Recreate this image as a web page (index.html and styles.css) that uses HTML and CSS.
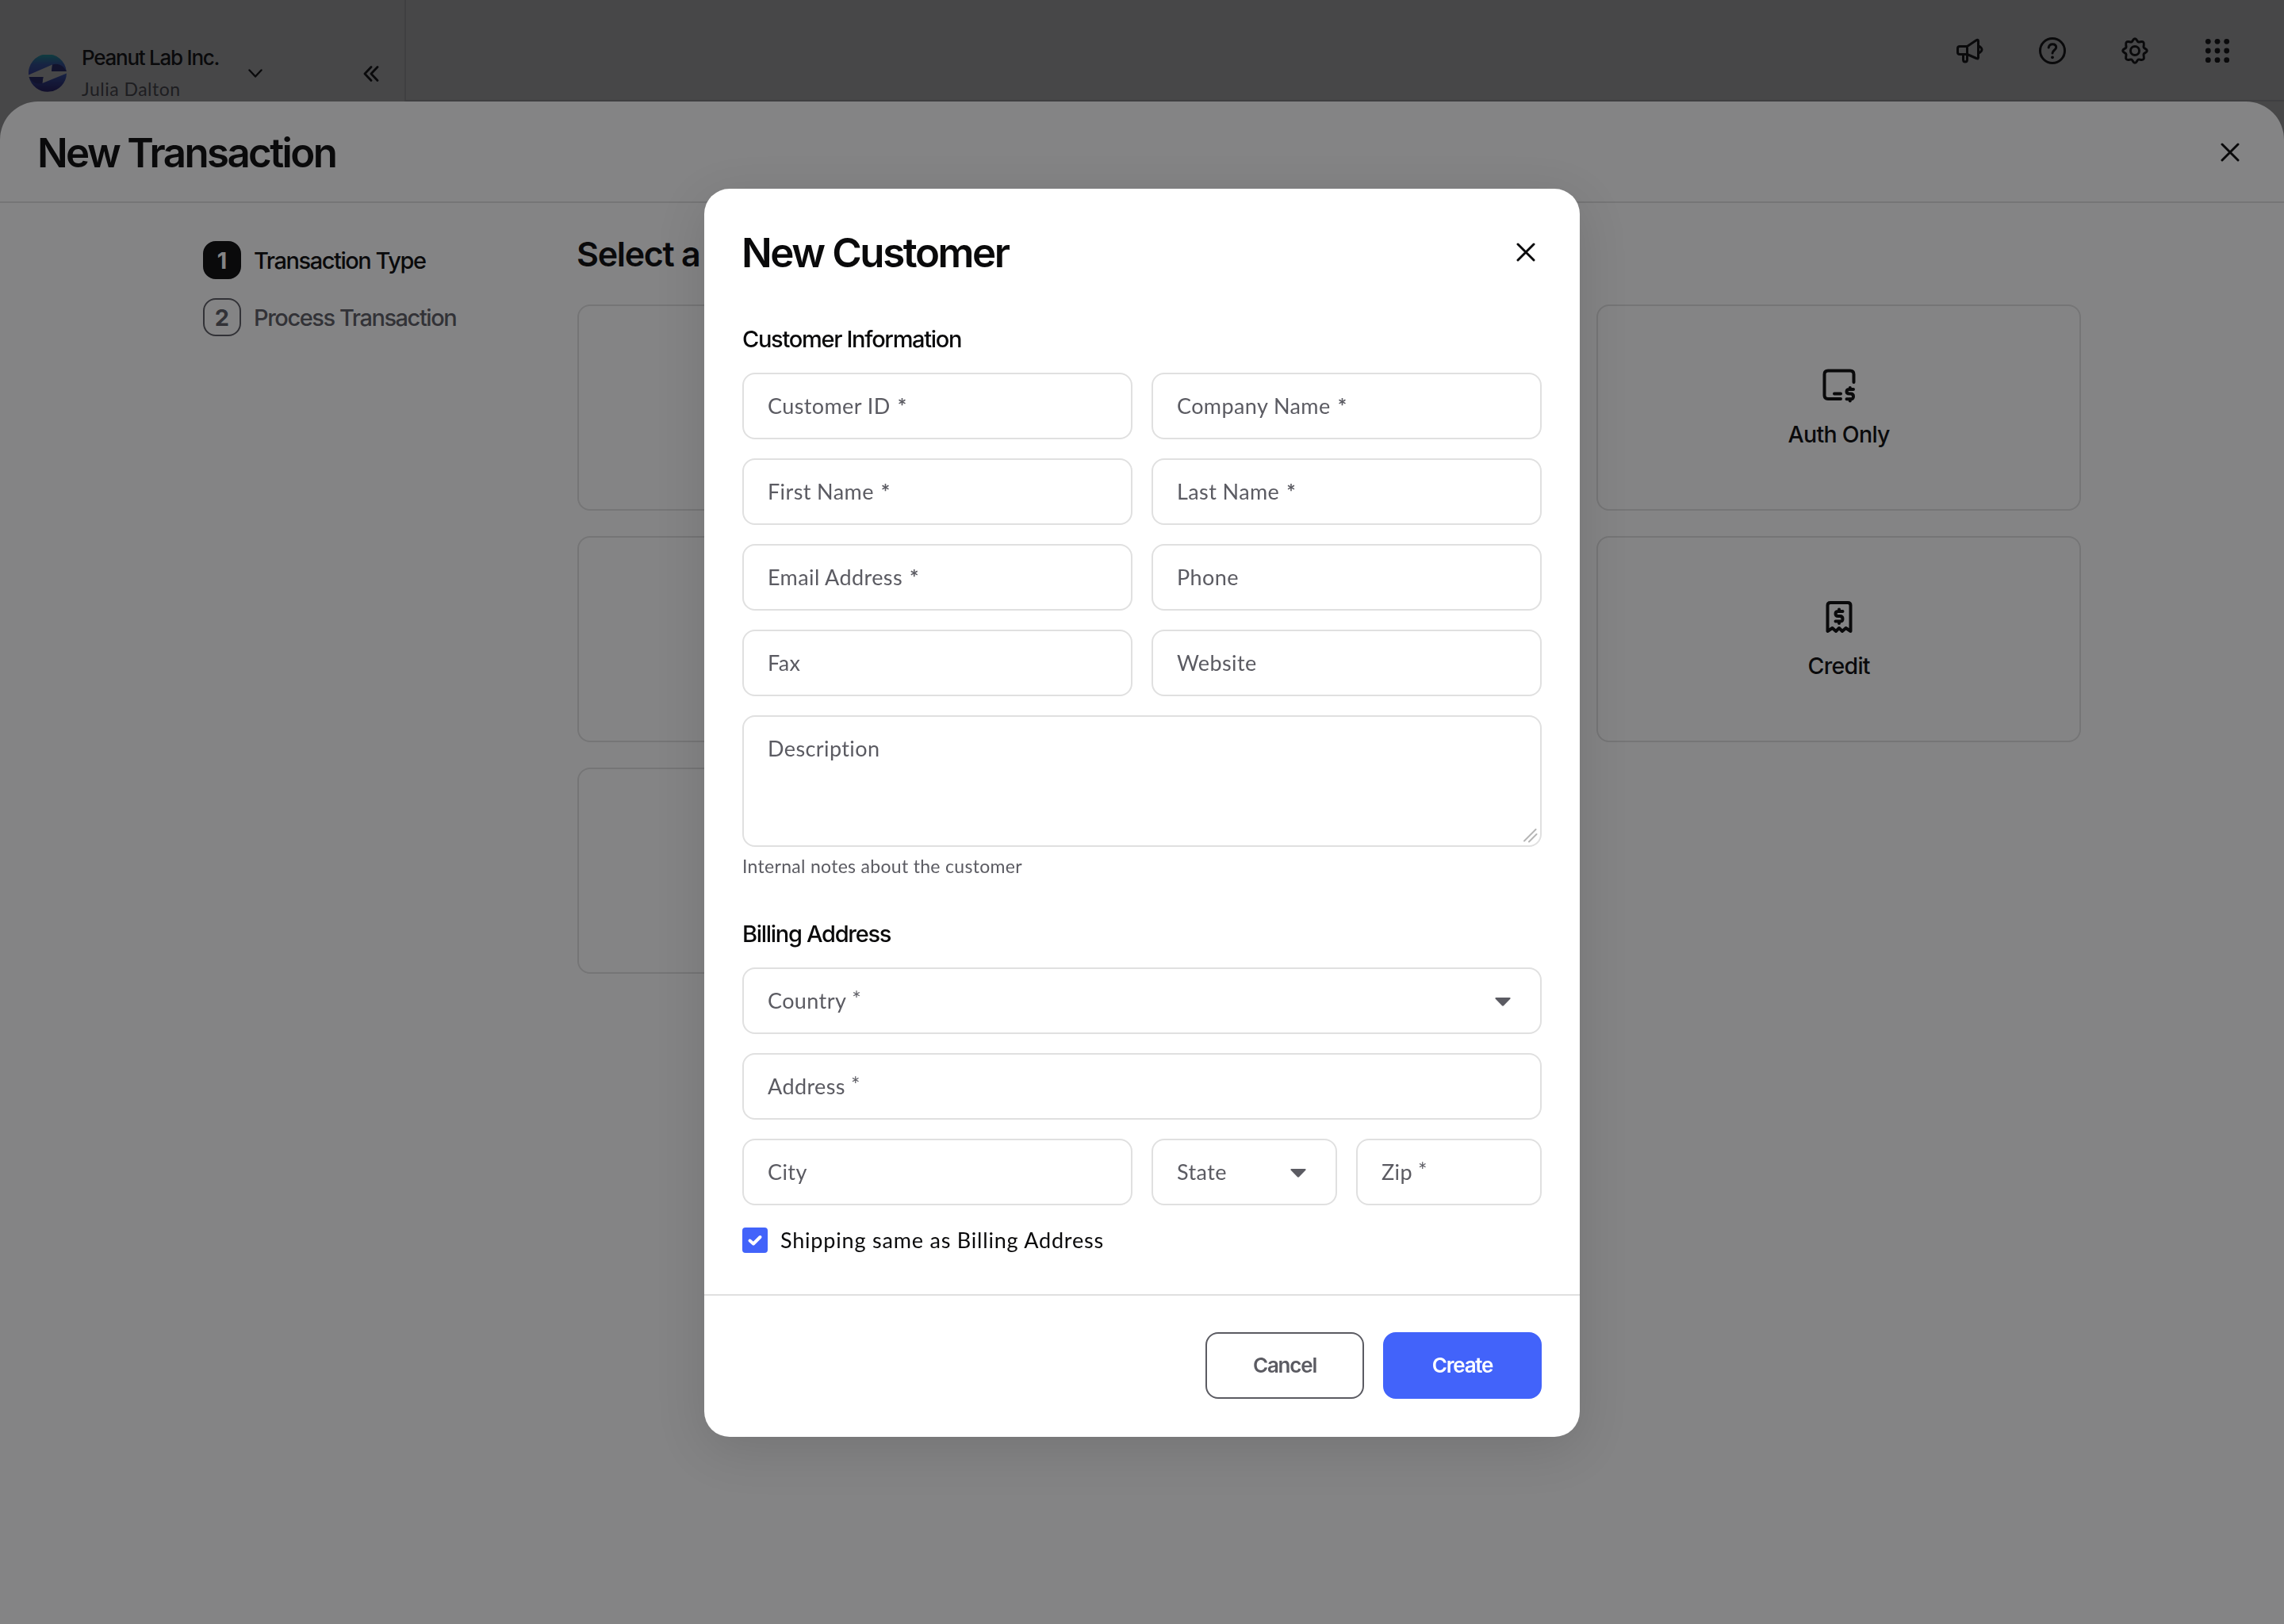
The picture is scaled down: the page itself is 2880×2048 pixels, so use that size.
FILE: index.html
```html
<!DOCTYPE html>
<html lang="en">
<head>
    <meta charset="UTF-8">
    <meta name="viewport" content="width=device-width, initial-scale=1.0">
    <title>New Transaction</title>
    <link rel="stylesheet" href="styles.css">
</head>
<body>

    <!-- APP SHELL -->
    <div class="app">
        <aside class="sidebar">
            <div class="account">
                <svg class="logo" viewBox="0 0 48 48">
                    <defs>
                        <linearGradient id="logo-top" x1="0" y1="0" x2="0" y2="1">
                            <stop offset="0" stop-color="#1fd8dc"/>
                            <stop offset="0.5" stop-color="#3f70e8"/>
                            <stop offset="1" stop-color="#4450d8"/>
                        </linearGradient>
                        <linearGradient id="logo-bottom" x1="0" y1="0" x2="0" y2="1">
                            <stop offset="0" stop-color="#3f6cf0"/>
                            <stop offset="1" stop-color="#2a1f8c"/>
                        </linearGradient>
                    </defs>
                    <path fill="url(#logo-top)" d="M0 25.500A24 24 0 0 1 47.800 21L29 21L30 12.500Z"/>
                    <path fill="#2c2f92" d="M29 21L30 12.500C38 10 44 14 47.800 21Z"/>
                    <path fill="url(#logo-bottom)" d="M48 23.500A24 24 0 0 1 .6 28L18.500 28L17.300 36Z"/>
                    <path fill="#2c2f92" d="M.6 28H18.500L17.300 36C9 38 3 34 .6 28Z"/>
                </svg>
                <div class="account-text">
                    <span class="account-name">Peanut Lab Inc.</span>
                    <span class="account-user">Julia Dalton</span>
                </div>
                <svg class="chevron" viewBox="0 0 18 12"><path d="M1.500 1.500L9 9.500L16.500 1.500"/></svg>
            </div>
            <svg class="collapse" viewBox="0 0 20 20"><path d="M10 1.500L2 10L10 18.500M18 1.500L10 10L18 18.500"/></svg>
        </aside>
        <header class="topbar">
            <svg class="icon" viewBox="0 0 40 40">
                <path d="M16.500 14.500H7.200Q4.500 14.500 4.500 17V22Q4.500 24.500 7.200 24.500H16.500ZM16.500 14.500L28 6.800Q30.500 5.500 30.500 8V28.500Q30.500 31 28 29.500L16.500 24.500M11.500 24.500V31Q11.500 34 14 34T16.500 31V24.500M30.500 13.500Q35 16 35 18.500T30.500 23.500"/>
            </svg>
            <svg class="icon" viewBox="0 0 40 40">
                <circle cx="20" cy="20" r="15.500"/>
                <path d="M15.200 16C15.600 13.400 17.500 11.700 20.200 11.700C23.200 11.700 24.700 13.500 24.700 15.800C24.700 19 20 19.500 20 23"/>
                <circle class="solid" cx="20" cy="28.300" r="1.900"/>
            </svg>
            <svg class="icon" viewBox="0 0 40 40">
                <circle cx="20" cy="20" r="5.500"/>
                <path d="M20 4.700C22.400 4.700 22.600 8.200 24.200 8.900C25.900 9.600 28.900 7.500 30.700 9.300C32.500 11.100 30.400 14.100 31.100 15.800C31.800 17.400 35.300 17.600 35.300 20C35.300 22.400 31.800 22.600 31.100 24.200C30.400 25.900 32.500 28.900 30.700 30.700C28.900 32.500 25.900 30.400 24.200 31.100C22.600 31.800 22.400 35.300 20 35.300C17.600 35.300 17.400 31.800 15.800 31.100C14.100 30.400 11.100 32.500 9.300 30.700C7.500 28.900 9.600 25.900 8.900 24.200C8.200 22.600 4.700 22.400 4.700 20C4.700 17.600 8.200 17.400 8.900 15.800C9.600 14.100 7.500 11.100 9.300 9.300C11.100 7.500 14.100 9.600 15.800 8.900C17.400 8.200 17.600 4.700 20 4.700Z"/>
            </svg>
            <svg class="icon dots" viewBox="0 0 40 40">
                <circle cx="8.300" cy="8.300" r="3.400"/><circle cx="20" cy="8.300" r="3.400"/><circle cx="31.700" cy="8.300" r="3.400"/>
                <circle cx="8.300" cy="20" r="3.400"/><circle cx="20" cy="20" r="3.400"/><circle cx="31.700" cy="20" r="3.400"/>
                <circle cx="8.300" cy="31.700" r="3.400"/><circle cx="20" cy="31.700" r="3.400"/><circle cx="31.700" cy="31.700" r="3.400"/>
            </svg>
        </header>
    </div>

    <!-- NEW TRANSACTION SHEET -->
    <div class="sheet-backdrop">
        <section class="sheet">
            <div class="sheet-header">
                <h1 class="title">New Transaction</h1>
                <svg class="close" viewBox="0 0 24 24"><path d="M2 2L22 22M22 2L2 22"/></svg>
            </div>
            <div class="sheet-body">
                <ol class="steps">
                    <li class="step active"><span class="step-number">1</span><span>Transaction Type</span></li>
                    <li class="step"><span class="step-number">2</span><span>Process Transaction</span></li>
                </ol>
                <div class="types">
                    <h2 class="types-title">Select a</h2>
                    <div class="cards">
                        <div class="card"></div>
                        <div class="card"></div>
                        <div class="card">
                            <svg class="card-icon" viewBox="0 0 48 48">
                                <path d="M26 41H10Q5.500 41 5.500 36.500V10Q5.500 5.500 10 5.500H38Q42.500 5.500 42.500 10V20M18 34.500H26"/>
                                <path d="M42 29H37Q33.500 29 33.500 31.700T37 34.500H38.500Q42 34.500 42 38T38.500 41.200H33.500M37.800 27V29M37.800 41V43.500"/>
                            </svg>
                            <span>Auth Only</span>
                        </div>
                        <div class="card"></div>
                        <div class="card"></div>
                        <div class="card">
                            <svg class="card-icon" viewBox="0 0 48 48">
                                <path d="M9.500 42V9.500Q9.500 6 13 6H35Q38.500 6 38.500 9.500V42L32.500 38L28 42L24 38L20 42L15.500 38Z"/>
                                <path d="M28.500 17H23Q19.500 17 19.500 20T23 23H25Q28.500 23 28.500 26.500T25 29.500H19.500M24 14.500V17M24 29.500V32"/>
                            </svg>
                            <span>Credit</span>
                        </div>
                        <div class="card"></div>
                    </div>
                </div>
            </div>
        </section>
    </div>

    <!-- NEW CUSTOMER MODAL -->
    <div class="modal-backdrop">
        <section class="modal">
            <div class="modal-header">
                <h2 class="title">New Customer</h2>
                <svg class="close" viewBox="0 0 24 24"><path d="M2 2L22 22M22 2L2 22"/></svg>
            </div>
            <form class="modal-body">
                <h3 class="section-title">Customer Information</h3>
                <div class="fields">
                    <div class="field">Customer ID<b class="req">*</b></div>
                    <div class="field">Company Name<b class="req">*</b></div>
                    <div class="field">First Name<b class="req">*</b></div>
                    <div class="field">Last Name<b class="req">*</b></div>
                    <div class="field">Email Address<b class="req">*</b></div>
                    <div class="field">Phone</div>
                    <div class="field">Fax</div>
                    <div class="field">Website</div>
                    <div class="field full textarea">Description
                        <svg class="resize" viewBox="0 0 18 18"><path d="M1 15.500L15.500 1M7 16.500L16.500 7"/></svg>
                    </div>
                </div>
                <p class="hint">Internal notes about the customer</p>
                <h3 class="section-title">Billing Address</h3>
                <div class="fields">
                    <div class="field full">Country<span class="req light">*</span>
                        <svg class="caret" viewBox="0 0 20 11"><path d="M1.500 0H18.500Q20.500 .5 19 2L11 10.300Q10 11 9 10.300L1 2Q-.5 .5 1.500 0Z"/></svg>
                    </div>
                    <div class="field full">Address<span class="req light">*</span></div>
                    <div class="field">City</div>
                    <div class="split">
                        <div class="field">State
                            <svg class="caret" viewBox="0 0 20 11"><path d="M1.500 0H18.500Q20.500 .5 19 2L11 10.300Q10 11 9 10.300L1 2Q-.5 .5 1.500 0Z"/></svg>
                        </div>
                        <div class="field">Zip<span class="req light">*</span></div>
                    </div>
                </div>
                <label class="check">
                    <span class="checkbox"><svg viewBox="0 0 32 32"><path d="M9.500 16.500L14 20.500L22.500 12"/></svg></span>
                    Shipping same as Billing Address
                </label>
            </form>
            <div class="modal-footer">
                <button class="btn">Cancel</button>
                <button class="btn primary">Create</button>
            </div>
        </section>
    </div>

</body>
</html>
```

FILE: styles.css
```css
* {
    box-sizing: border-box;
}

body {
    margin: 0;
    height: 2048px;
    overflow: hidden;
    background: #fff;
    color: #0a0a0b;
    font-family: Lato, sans-serif;
}

h1, h2, h3, p, ol {
    margin: 0;
    padding: 0;
}

svg {
    display: block;
    flex: none;
    fill: none;
    stroke: #0a0a0b;
    stroke-width: 3;
    stroke-linecap: round;
    stroke-linejoin: round;
}

/* app shell */
.app {
    display: flex;
    height: 2048px;
}

.sidebar {
    width: 512px;
    padding: 57px 32px 0 36px;
    border-right: 2px solid #e0e0e0;
    display: flex;
    justify-content: space-between;
    align-items: flex-start;
}

.account {
    display: flex;
    align-items: center;
}

.logo {
    width: 48px;
    height: 48px;
    stroke: none;
}

.account-text {
    margin-left: 19px;
    margin-bottom: -3px;
    width: 210px;
    display: flex;
    flex-direction: column;
    gap: 3px;
}

.account-name {
    font: 500 26px/32px Inter, sans-serif;
    letter-spacing: -1.25px;
}

.account-user {
    font-size: 23px;
    line-height: 40px;
    color: #5b5b62;
    letter-spacing: 0.5px;
}

.chevron {
    width: 18px;
    height: 12px;
    stroke-width: 2.4;
}

.collapse {
    width: 20px;
    height: 20px;
    margin-top: 26px;
    stroke-width: 2.8;
}

.topbar {
    flex: 1;
    height: 128px;
    padding: 2px 64px 0 0;
    border-bottom: 2px solid #e0e0e0;
    display: flex;
    justify-content: flex-end;
    align-items: center;
    gap: 64px;
}

.icon {
    width: 40px;
    height: 40px;
}

.icon .solid, .dots {
    fill: #0a0a0b;
    stroke: none;
}

/* transaction sheet */
.sheet-backdrop, .modal-backdrop {
    position: fixed;
    inset: 0;
    background: rgba(10, 10, 11, 0.5);
}

.sheet {
    height: 1920px;
    margin-top: 128px;
    background: #fff;
    border-radius: 48px 48px 0 0;
}

.sheet-header {
    height: 128px;
    padding: 2px 56px 0 47px;
    border-bottom: 2px solid #e0e0e0;
    display: flex;
    justify-content: space-between;
    align-items: center;
}

.title {
    padding-top: 2px;
    font: 600 51px/62px Inter, sans-serif;
    letter-spacing: -2.6px;
}

.close {
    width: 24px;
    height: 24px;
}

.sheet-body {
    display: flex;
    padding: 48px 256px 0;
}

.steps {
    width: 471px;
    list-style: none;
    display: flex;
    flex-direction: column;
    gap: 24px;
}

.step {
    display: flex;
    gap: 16px;
    height: 48px;
    color: #5b5b62;
    font: 500 29px/50px Inter, sans-serif;
    letter-spacing: -1.45px;
}

.step-number {
    width: 48px;
    height: 48px;
    border: 2px solid #5b5b62;
    border-radius: 16px;
    font-weight: 700;
    line-height: 46px;
    letter-spacing: 0;
    text-align: center;
}

.step.active {
    color: #0a0a0b;
}

.step.active .step-number {
    background: #0a0a0b;
    border-color: #0a0a0b;
    color: #fff;
}

.types {
    flex: 1;
}

.types-title {
    font: 600 43px/48px Inter, sans-serif;
    letter-spacing: -1.3px;
    margin-top: -8px;
    margin-bottom: 40px;
}

.cards {
    display: grid;
    grid-template-columns: repeat(3, 1fr);
    gap: 32px;
    margin-left: 1px;
}

.card {
    height: 260px;
    border: 2px solid #e0e0e0;
    border-radius: 16px;
    display: flex;
    flex-direction: column;
    align-items: center;
    padding-top: 76px;
    font: 500 28.500px/40px Inter, sans-serif;
    letter-spacing: -0.7px;
}

.card-icon {
    width: 48px;
    height: 48px;
    margin-bottom: 18px;
    stroke-width: 4;
}

/* customer modal */
.modal-backdrop {
    display: flex;
    align-items: flex-start;
    justify-content: center;
    padding-top: 238px;
}

.modal {
    width: 1104px;
    height: 1574px;
    background: #fff;
    border-radius: 32px;
    box-shadow: 0 16px 64px rgba(10, 10, 11, 0.12);
}

.modal-header {
    display: flex;
    justify-content: space-between;
    align-items: center;
    padding: 48px 56px 0 47px;
}

.modal .title {
    letter-spacing: -2.4px;
}

.modal-body {
    height: 1282px;
    padding: 58px 48px 0;
}

.section-title {
    font: 500 29px/40px Inter, sans-serif;
    letter-spacing: -1.3px;
    margin-bottom: 22px;
}

.fields {
    display: grid;
    grid-template-columns: 1fr 1fr;
    gap: 24px;
}

.split {
    display: grid;
    grid-template-columns: 1fr 1fr;
    gap: 24px;
}

.field {
    height: 84px;
    padding: 0 30px 2px;
    border: 2px solid #e0e0e0;
    border-radius: 16px;
    display: flex;
    align-items: center;
    color: #5b5b62;
    font-size: 27px;
    letter-spacing: 0.4px;
}

.full {
    grid-column: 1 / 3;
}

.req {
    margin-left: 9px;
}

.req.light {
    margin-left: 7px;
    margin-top: -4px;
}

.caret {
    width: 20px;
    height: 11px;
    margin-top: 5px;
    margin-left: auto;
    margin-right: 7px;
    fill: #5b5b62;
    stroke: none;
}

.textarea {
    position: relative;
    height: 166px;
    align-items: flex-start;
    line-height: 80px;
}

.resize {
    position: absolute;
    right: 3px;
    bottom: 3px;
    width: 18px;
    height: 18px;
    stroke: #b5b5b5;
    stroke-width: 2;
}

.hint {
    margin: 8px 0 50px;
    color: #5b5b62;
    font-size: 23px;
    line-height: 32px;
    letter-spacing: 0.3px;
}

.check {
    margin-top: 24px;
    display: flex;
    align-items: center;
    gap: 16px;
    font-size: 27px;
    line-height: 40px;
    letter-spacing: 0.8px;
}

.checkbox {
    width: 32px;
    height: 32px;
    background: #4263fa;
    border-radius: 4px;
}

.checkbox svg {
    stroke: #fff;
    stroke-width: 4;
}

.modal-footer {
    border-top: 2px solid #e0e0e0;
    padding: 46px 48px 0;
    display: flex;
    justify-content: flex-end;
    gap: 24px;
}

.btn {
    width: 200px;
    height: 84px;
    background: #fff;
    color: #5b5b62;
    border: 2px solid #5b5b62;
    border-radius: 16px;
    font: 600 26px/40px Inter, sans-serif;
    letter-spacing: -1.2px;
}

.btn.primary {
    background: #4263fa;
    border-color: #4263fa;
    color: #fff;
}
```
